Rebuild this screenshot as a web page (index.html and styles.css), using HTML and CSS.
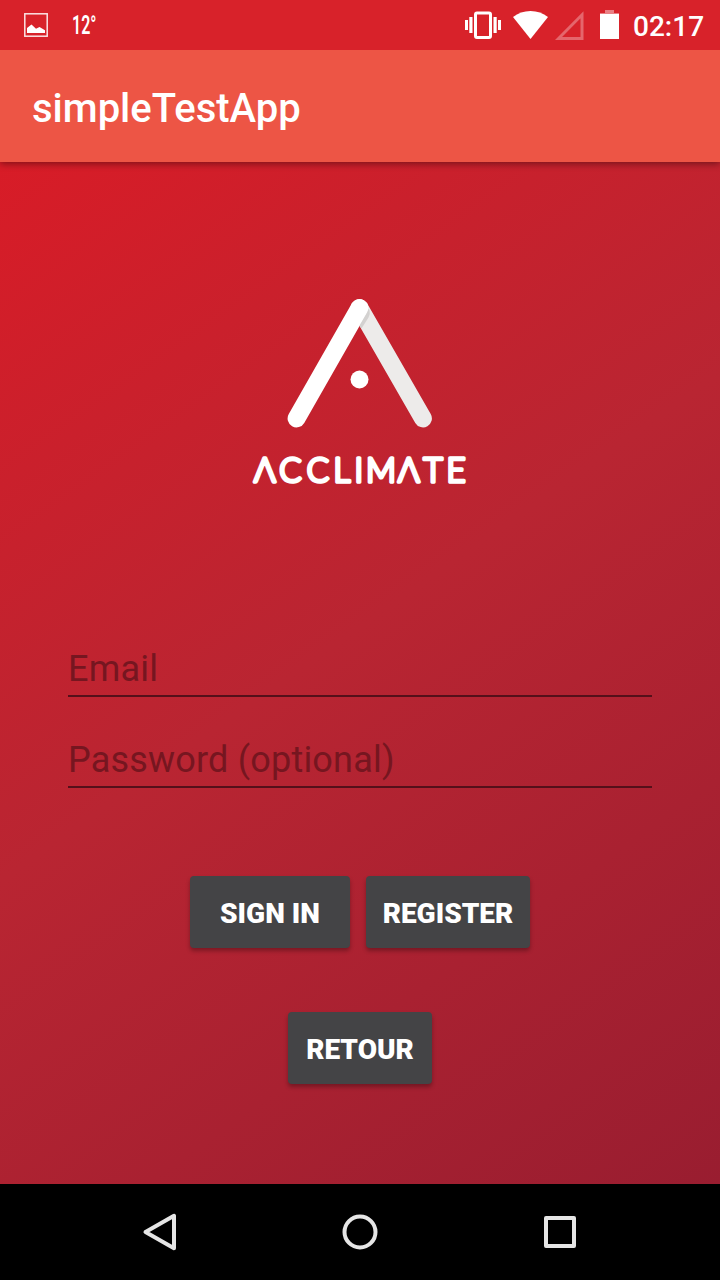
FILE: index.html
```html
<!DOCTYPE html>
<html lang="en">
<head>
<meta charset="utf-8">
<title>simpleTestApp</title>
<link rel="stylesheet" href="styles.css">
</head>
<body>
<div class="screen">
  <div class="status-bar">
    <svg class="photo-icon" width="24" height="24" viewBox="0 0 24 24">
      <rect x=".8" y=".8" width="22.4" height="22.4" fill="none" stroke="#fbe3e4" stroke-width="1.5"/>
      <path d="M3 20v-5l4.500-3.500 4.500 4.200 3.500-1.700 5.500 3.200v2.800z" fill="#fff"/>
    </svg>
    <span class="temperature">12°</span>
    <svg class="vibrate-icon" width="36" height="28" viewBox="0 0 36 28" fill="#fff">
      <rect x="10.500" y="2" width="15" height="24.500" rx="1.500" fill="none" stroke="#fff" stroke-width="3"/>
      <path d="M0 9h3v10H0zM4.300 6h3.200v16H4.300zM28.500 6h3.200v16h-3.200zM33 9h3v10h-3z"/>
    </svg>
    <svg class="wifi-icon" width="35" height="28" viewBox="0 0 35 28">
      <path d="M17.500 28 0 6Q7.500 0 17.500 0T35 6z" fill="#fff"/>
    </svg>
    <svg class="signal-icon" width="29" height="29" viewBox="0 0 29 29">
      <path d="M3.500 27.500H27V3.800z" fill="none" stroke="#e5666c" stroke-width="3"/>
    </svg>
    <svg class="battery-icon" width="19" height="29" viewBox="0 0 19 29">
      <path d="M5 0h9v3h5v2H0V3h5z" fill="#e98085"/>
      <path d="M0 4h19v25H0z" fill="#fff"/>
    </svg>
    <span class="clock">02:17</span>
  </div>
  <header class="app-bar">simpleTestApp</header>
  <main class="content">
    <svg class="logo" width="240" height="200" viewBox="240 298 240 200" role="img" aria-label="Acclimate">
      <g fill="none" stroke-width="17.800" stroke-linecap="round">
        <path d="M359.500 308 423 418.500" stroke="#edebea"/>
        <path d="M359.500 308 296.500 418.500" stroke="#fff"/>
      </g>
      <path d="M368.500 308.500Q368 311 366.500 313.500L359.500 325.500 361.500 328.500 368.500 317.500Q370.500 313.500 369.500 310z" fill="#d3d1d0"/>
      <circle cx="359.500" cy="379.500" r="9" fill="#fff"/>
      <text class="wordmark" y="482" x="254 279.200 306.700 333.500 354.500 366 398 423.500 446.500">ΛCCLIMΛTE</text>
    </svg>
    <form class="login">
      <input class="field" type="text" placeholder="Email">
      <input class="field" type="text" placeholder="Password (optional)">
      <div class="actions">
        <button class="button sign-in" type="button">SIGN IN</button>
        <button class="button register" type="button">REGISTER</button>
      </div>
      <button class="button back" type="button">RETOUR</button>
    </form>
  </main>
  <nav class="nav-bar">
    <svg width="40" height="40" viewBox="0 0 40 40"><path d="M5.500 20 34 3.800v32.400z"/></svg>
    <svg width="40" height="40" viewBox="0 0 40 40"><circle cx="20" cy="20" r="15.500"/></svg>
    <svg width="40" height="40" viewBox="0 0 40 40"><path d="M6 6h28v28H6z"/></svg>
  </nav>
</div>
</body>
</html>
```
FILE: styles.css
```css
* { box-sizing: border-box; }
body { margin: 0; font-family: Roboto, "Liberation Sans", sans-serif; }
.screen { width: 720px; height: 1280px; display: flex; flex-direction: column; overflow: hidden; }
.status-bar {
  height: 50px; flex: none; display: flex; align-items: flex-start; position: relative; z-index: 2;
  padding: 0 16px 0 24px; background: #d8222a; color: #fff;
}
.photo-icon { margin-top: 13px; }
.temperature {
  margin: 11px 0 0 24px; width: 28px; font-size: 25px; line-height: 30px; font-weight: 600;
  white-space: nowrap; transform: scaleX(.64); transform-origin: left;
}
.vibrate-icon { margin: 11px 0 0 auto; }
.wifi-icon { margin: 11px 0 0 12px; }
.signal-icon { margin: 11px 0 0 7px; }
.battery-icon { margin: 10px 0 0 16px; }
.clock { width: 71px; margin-left: 14px; font-size: 28px; line-height: 54px; font-weight: 500; }
.app-bar {
  height: 112px; flex: none; padding-left: 32px; position: relative; z-index: 1;
  background: #ed5545; color: #fff; font-size: 40px; line-height: 118px; font-weight: 500;
  box-shadow: 0 2px 7px rgba(0, 0, 0, .4);
}
.content {
  flex: 1; display: flex; flex-direction: column; align-items: center;
  background: linear-gradient(144.800deg, #d81c27, #b92532 47%, #991d30);
}
.logo { margin-top: 136px; flex: none; }
.wordmark {
  font-family: Lato, "DejaVu Sans", sans-serif; font-size: 33px; font-weight: 300; fill: #fff;
  stroke: #fff; stroke-width: 3.500px; stroke-linejoin: round;
}
.login { width: 584px; margin-top: 145px; display: flex; flex-direction: column; align-items: center; }
.field {
  width: 584px; height: 54px; margin: 0 0 37px; padding: 0; display: block;
  border: 0; border-bottom: 2px solid #55101a; border-radius: 0; outline: 0;
  background: transparent; font: 36px/52px Roboto, sans-serif; letter-spacing: .2px; color: #761620;
}
.field::placeholder { color: #761620; opacity: 1; }
.actions { display: flex; gap: 16px; margin-top: 51px; }
.button {
  height: 72px; padding: 4px 0 0; border: 0; border-radius: 4px;
  background: #444446; color: #fff; font: 900 28px/68px Roboto, sans-serif;
  box-shadow: 0 3px 4px rgba(0, 0, 0, .3);
}
.sign-in { width: 160px; }
.register { width: 164px; }
.back { width: 144px; margin-top: 64px; }
.nav-bar {
  height: 96px; flex: none; padding: 28px 140px; display: flex;
  justify-content: space-between; background: #000;
}
.nav-bar svg { fill: none; stroke: #e6e6e6; stroke-width: 4; stroke-linejoin: round; }
```
